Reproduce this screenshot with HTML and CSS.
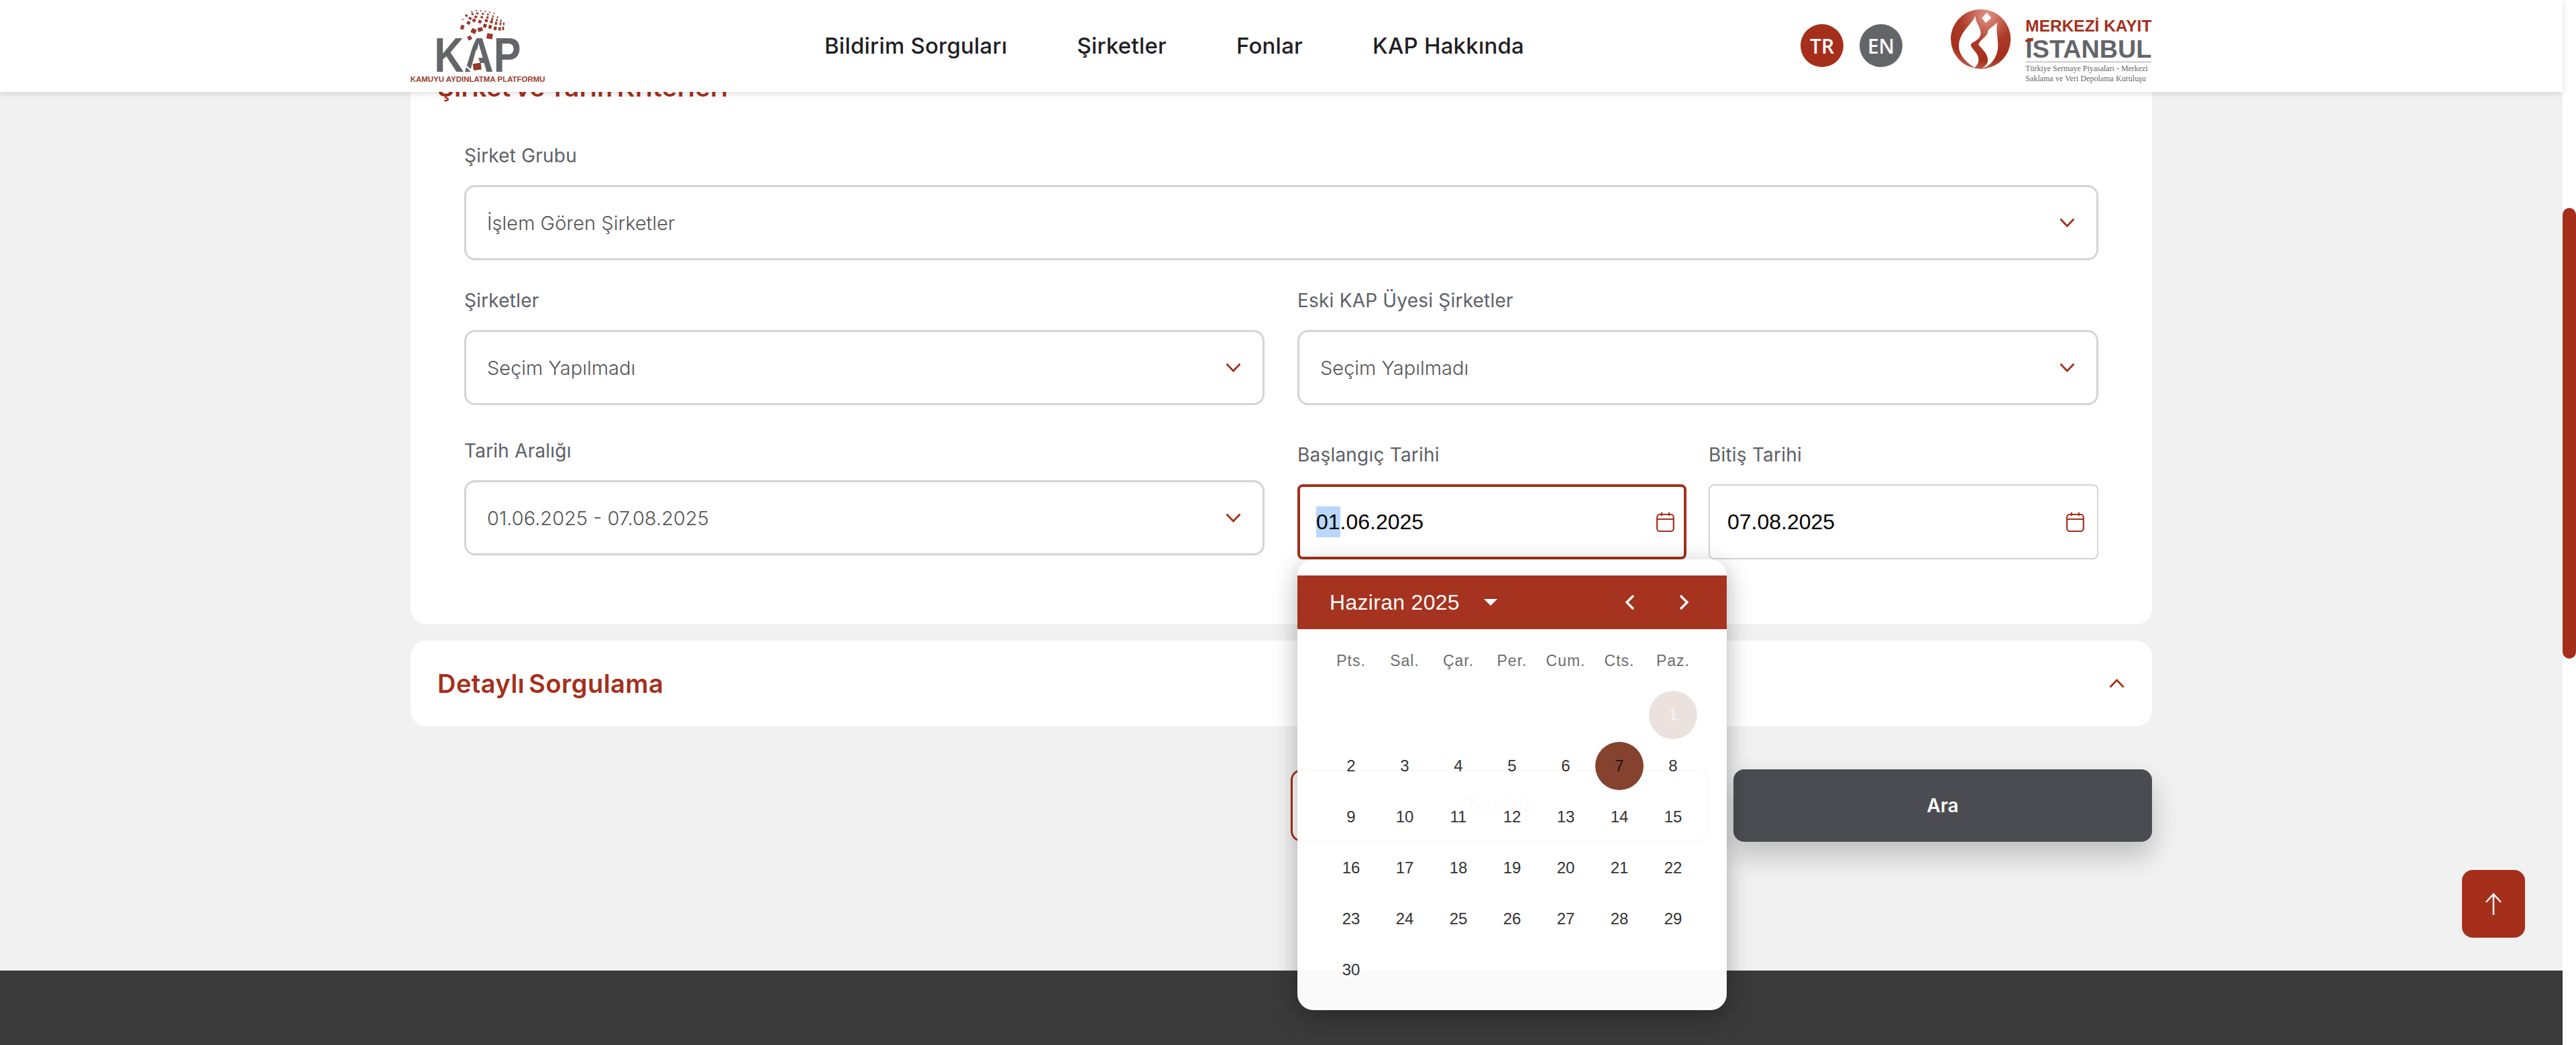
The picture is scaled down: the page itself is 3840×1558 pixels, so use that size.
FILE: index.html
```html
<!DOCTYPE html>
<html lang="tr">
<head>
<meta charset="utf-8">
<title>KAP - Bildirim Sorguları</title>
<link rel="stylesheet" href="styles.css">
</head>
<body>
<div class="page">
  <header class="topbar">
    <div class="topbar-inner">
      <svg class="kap-logo" viewBox="0 0 630 375" aria-label="KAP">
        <text class="kap-word" x="112" y="305" textLength="388" lengthAdjust="spacingAndGlyphs">KAP</text>
        <polygon class="logo-white" points="300,205 272,305 332,305 308,240"/>
        <polygon class="logo-white" points="262,215 296,150 304,150 268,226"/>
        <polygon class="logo-white" points="238,262 288,305 276,305 236,268"/>
        <g class="kap-dots">
          <rect x="286" y="268" width="36" height="30" transform="rotate(-8 304 283)"/>
          <rect x="347" y="135" width="26" height="24" transform="rotate(12 360 147)"/>
          <rect x="262" y="146" width="17" height="18" transform="rotate(-25 270 155)"/>
          <rect x="277" y="114" width="22" height="20" transform="rotate(25 288 124)"/>
          <rect x="307" y="108" width="21" height="18" transform="rotate(-15 318 117)"/>
          <rect x="230" y="97" width="15" height="20" transform="rotate(18 238 107)"/>
          <rect x="331" y="92" width="15" height="16" transform="rotate(18 338 100)"/>
          <rect x="355" y="97" width="14" height="16" transform="rotate(15 362 105)"/>
          <rect x="378" y="104" width="13" height="16" transform="rotate(10 385 112)"/>
          <rect x="399" y="106" width="11" height="16" transform="rotate(5 405 114)"/>
          <rect x="416" y="104" width="8" height="16"/>
          <rect x="258" y="80" width="15" height="14" transform="rotate(28 265 87)"/>
          <rect x="283" y="69" width="14" height="14" transform="rotate(25 290 76)"/>
          <rect x="309" y="75" width="14" height="14" transform="rotate(20 316 82)"/>
          <rect x="338" y="71" width="13" height="13" transform="rotate(15 345 78)"/>
          <rect x="362" y="76" width="12" height="13" transform="rotate(12 368 83)"/>
          <rect x="383" y="83" width="10" height="13" transform="rotate(10 388 90)"/>
          <rect x="404" y="85" width="8" height="13" transform="rotate(5 408 92)"/>
          <rect x="420" y="85" width="6" height="13"/>
          <rect x="233" y="71" width="14" height="3" transform="rotate(-25 240 72)"/>
          <rect x="266" y="61" width="13" height="11" transform="rotate(28 272 67)"/>
          <rect x="292" y="55" width="12" height="11" transform="rotate(24 298 60)"/>
          <rect x="319" y="57" width="11" height="10" transform="rotate(20 325 62)"/>
          <rect x="345" y="58" width="10" height="10" transform="rotate(16 350 63)"/>
          <rect x="367" y="65" width="9" height="10" transform="rotate(14 372 70)"/>
          <rect x="388" y="70" width="8" height="10" transform="rotate(10 392 75)"/>
          <rect x="407" y="73" width="6" height="10" transform="rotate(6 410 78)"/>
          <rect x="250" y="50" width="11" height="9" transform="rotate(30 255 55)"/>
          <rect x="278" y="44" width="10" height="8" transform="rotate(28 283 48)"/>
          <rect x="300" y="41" width="10" height="8" transform="rotate(24 305 45)"/>
          <rect x="325" y="43" width="9" height="8" transform="rotate(20 330 47)"/>
          <rect x="348" y="46" width="8" height="8" transform="rotate(18 352 50)"/>
          <rect x="371" y="54" width="7" height="8" transform="rotate(16 375 58)"/>
          <rect x="392" y="58" width="6" height="8" transform="rotate(14 395 62)"/>
          <rect x="276" y="35" width="8" height="5" transform="rotate(28 280 38)"/>
          <rect x="296" y="31" width="8" height="4" transform="rotate(24 300 33)"/>
          <rect x="316" y="31" width="8" height="4" transform="rotate(18 320 33)"/>
          <rect x="336" y="34" width="8" height="4" transform="rotate(16 340 36)"/>
          <rect x="356" y="38" width="8" height="4" transform="rotate(18 360 40)"/>
          <rect x="376" y="43" width="8" height="4" transform="rotate(24 380 45)"/>
        </g>
        <text class="kap-tag" x="5" y="352" textLength="603" lengthAdjust="spacingAndGlyphs">KAMUYU AYDINLATMA PLATFORMU</text>
      </svg>
      <nav class="main-nav">
        <a>Bildirim Sorguları</a>
        <a>Şirketler</a>
        <a>Fonlar</a>
        <a>KAP Hakkında</a>
      </nav>
      <div class="lang-switch">
        <span class="lang lang-active">TR</span>
        <span class="lang lang-idle">EN</span>
      </div>
      <div class="mkk-logo">
        <svg class="mkk-mark" viewBox="0 0 330 315" aria-hidden="true">
          <defs>
            <radialGradient id="mkkGrad" gradientUnits="userSpaceOnUse" cx="185" cy="55" r="270">
              <stop offset="0" stop-color="#e39488"/>
              <stop offset=".45" stop-color="#ab3a26"/>
              <stop offset=".75" stop-color="#a52f1b"/>
              <stop offset="1" stop-color="#d27a6b"/>
            </radialGradient>
          </defs>
          <ellipse cx="158" cy="160" rx="134" ry="133" fill="url(#mkkGrad)"/>
          <path class="logo-white" d="M133,55 C125,90 62,125 60,190 C60,225 80,255 130,288 C150,270 155,250 140,225 C130,210 115,200 113,183 C125,170 155,165 158,135 C158,105 135,90 133,55Z"/>
          <path class="logo-white" d="M232,85 C215,105 195,110 190,125 C192,145 150,165 148,185 C165,205 190,225 190,255 C188,270 178,282 165,290 C200,285 235,240 235,190 C235,150 225,125 232,85Z"/>
          <polygon class="logo-white" points="185,42 205,65 180,88 163,65"/>
        </svg>
        <svg class="mkk-word" viewBox="0 0 594 330" aria-label="Merkezi Kayıt İstanbul">
          <text class="mkk-red" x="28" y="80" textLength="564" lengthAdjust="spacingAndGlyphs">MERKEZİ KAYIT</text>
          <text class="mkk-gray" x="28" y="198" textLength="564" lengthAdjust="spacingAndGlyphs">İSTANBUL</text>
          <rect class="logo-white" x="20" y="84" width="60" height="26"/>
          <polygon class="mkk-slash" points="28,118 62,108 62,124 28,128"/>
          <rect class="mkk-rule" x="28" y="214" width="564" height="6"/>
          <text class="mkk-small" x="28" y="258" textLength="547" lengthAdjust="spacingAndGlyphs">Türkiye Sermaye Piyasaları - Merkezi</text>
          <text class="mkk-small" x="28" y="302" textLength="539" lengthAdjust="spacingAndGlyphs">Saklama ve Veri Depolama Kuruluşu</text>
        </svg>
      </div>
    </div>
  </header>

  <main class="content">
    <section class="card">
      <div class="card-head">
        <h2 class="card-title">Şirket ve Tarih Kriterleri</h2>
        <svg class="chev chev-flip" viewBox="0 0 23 14"><polyline points="1.5,1.5 11.5,12 21.5,1.5"/></svg>
      </div>
      <div class="card-body">
        <div class="field">
          <label class="field-label">Şirket Grubu</label>
          <div class="select"><span>İşlem Gören Şirketler</span><svg class="chev" viewBox="0 0 23 14"><polyline points="1.5,1.5 11.5,12 21.5,1.5"/></svg></div>
        </div>
        <div class="two-col">
          <div class="field">
            <label class="field-label">Şirketler</label>
            <div class="select"><span>Seçim Yapılmadı</span><svg class="chev" viewBox="0 0 23 14"><polyline points="1.5,1.5 11.5,12 21.5,1.5"/></svg></div>
          </div>
          <div class="field">
            <label class="field-label">Eski KAP Üyesi Şirketler</label>
            <div class="select"><span>Seçim Yapılmadı</span><svg class="chev" viewBox="0 0 23 14"><polyline points="1.5,1.5 11.5,12 21.5,1.5"/></svg></div>
          </div>
        </div>
        <div class="two-col two-col-dates">
          <div class="field">
            <label class="field-label">Tarih Aralığı</label>
            <div class="select"><span>01.06.2025 - 07.08.2025</span><svg class="chev" viewBox="0 0 23 14"><polyline points="1.5,1.5 11.5,12 21.5,1.5"/></svg></div>
          </div>
          <div class="date-pair">
            <div class="field date-field">
              <label class="field-label">Başlangıç Tarihi</label>
              <div class="date-input date-focus">
                <span class="date-text"><span class="date-sel">01</span>.06.2025</span>
                <svg class="cal-icon" viewBox="0 0 27 30"><rect x="1.2" y="4" width="24.6" height="25" rx="4"/><path d="M1.2 11H25.8M8 1V6M19 1V6"/></svg>
              </div>
              <div class="calendar">
                <div class="cal-head">
                  <span class="cal-month">Haziran 2025</span>
                  <svg class="cal-caret" viewBox="0 0 20 10"><polygon points="0,0 20,0 10,10"/></svg>
                  <svg class="cal-nav cal-prev" viewBox="0 0 16 24"><polyline points="13,2 3,12 13,22"/></svg>
                  <svg class="cal-nav cal-next" viewBox="0 0 16 24"><polyline points="3,2 13,12 3,22"/></svg>
                </div>
                <div class="cal-weekdays">
                  <span>Pts.</span><span>Sal.</span><span>Çar.</span><span>Per.</span><span>Cum.</span><span>Cts.</span><span>Paz.</span>
                </div>
                <div class="cal-days">
                  <span class="day day-first day-start">1</span>
                  <span class="day">2</span><span class="day">3</span><span class="day">4</span><span class="day">5</span><span class="day">6</span><span class="day day-today">7</span><span class="day">8</span>
                  <span class="day">9</span><span class="day">10</span><span class="day">11</span><span class="day">12</span><span class="day">13</span><span class="day">14</span><span class="day">15</span>
                  <span class="day">16</span><span class="day">17</span><span class="day">18</span><span class="day">19</span><span class="day">20</span><span class="day">21</span><span class="day">22</span>
                  <span class="day">23</span><span class="day">24</span><span class="day">25</span><span class="day">26</span><span class="day">27</span><span class="day">28</span><span class="day">29</span>
                  <span class="day">30</span>
                </div>
              </div>
            </div>
            <div class="field date-field">
              <label class="field-label">Bitiş Tarihi</label>
              <div class="date-input">
                <span class="date-text">07.08.2025</span>
                <svg class="cal-icon" viewBox="0 0 27 30"><rect x="1.2" y="4" width="24.6" height="25" rx="4"/><path d="M1.2 11H25.8M8 1V6M19 1V6"/></svg>
              </div>
            </div>
          </div>
        </div>
      </div>
    </section>

    <section class="card card-collapsed">
      <div class="card-head">
        <h2 class="card-title">Detaylı Sorgulama</h2>
        <svg class="chev chev-flip" viewBox="0 0 23 14"><polyline points="1.5,1.5 11.5,12 21.5,1.5"/></svg>
      </div>
    </section>

    <div class="actions">
      <button class="btn btn-clear">Temizle</button>
      <button class="btn btn-search">Ara</button>
    </div>
  </main>

  <footer class="footer"></footer>

  <button class="to-top" aria-label="Yukarı">
    <svg viewBox="0 0 26 34"><path d="M13 33V2M2 14L13 2L24 14"/></svg>
  </button>
</div>
<aside class="scrollbar"><div class="scroll-thumb"></div></aside>
</body>
</html>
```

FILE: styles.css
```css
* { box-sizing: border-box; }
html, body { margin: 0; height: 100%; }
body {
  display: flex;
  height: 1558px;
  overflow: hidden;
  background: #f1f1f1;
  font-family: "Inter", "Noto Sans", sans-serif;
}
.page {
  position: relative;
  flex: 1;
  min-width: 0;
  display: flex;
  flex-direction: column;
}
.scrollbar { width: 20px; background: #fff; padding-top: 310px; }
.scroll-thumb { height: 672px; background: #a52f1b; border-radius: 10px; }

/* header */
.topbar {
  position: absolute;
  z-index: 5;
  top: 0; left: 0; right: 0;
  height: 137px;
  background: #fff;
  box-shadow: 0 2px 10px rgba(0,0,0,.14);
}
.topbar-inner {
  width: 2596px;
  height: 100%;
  margin: 0 auto;
  display: flex;
  align-items: flex-start;
}
.kap-logo { width: 210px; height: 125px; margin: 5px 0 0 -2px; flex: none; }
.kap-word { font: 700 219px "Liberation Sans", sans-serif; fill: #636569; }
.kap-tag { font: 700 31px "Liberation Sans", sans-serif; fill: #96402c; }
.kap-dots rect { fill: #96392a; }
.logo-white { fill: #fff; }
.main-nav {
  display: flex;
  gap: 104px;
  margin: 48px 0 0 409px;
  font-size: 33px;
  line-height: 40px;
  font-weight: 500;
  color: #1f2024;
  letter-spacing: .2px;
  white-space: nowrap;
}
.lang-switch { display: flex; gap: 24px; margin: 36px 0 0 auto; }
.lang {
  width: 64px; height: 64px;
  border-radius: 50%;
  display: flex; align-items: center; justify-content: center;
  color: #fff;
  font: 600 30px "Open Sans", sans-serif;
}
.lang-active { background: #a52f1b; }
.lang-idle { background: #636569; }
.mkk-logo { display: flex; margin: 5px 0 0 64px; }
.mkk-mark { width: 110px; height: 105px; flex: none; }
.mkk-word { width: 198px; height: 110px; margin-top: 15px; flex: none; }
.mkk-red { font: 700 70px "Liberation Sans", sans-serif; fill: #a52f1b; }
.mkk-gray { font: 700 112px "Liberation Sans", sans-serif; fill: #636569; }
.mkk-slash { fill: #a52f1b; }
.mkk-rule { fill: #c9c9c9; }
.mkk-small { font: 400 36px "Liberation Serif", serif; fill: #666; }

/* content */
.content {
  width: 2596px;
  margin: 0 auto;
  padding-top: 66px;
  display: flex;
  flex-direction: column;
}
.card {
  background: #fff;
  border-radius: 24px;
  height: 865px;
}
.card-collapsed { height: 128px; margin-top: 24px; }
.card-head {
  height: 128px;
  padding: 0 41px 0 40px;
  display: flex;
  align-items: center;
  justify-content: space-between;
}
.card-title {
  margin: 0;
  font-size: 38px;
  line-height: 44px;
  font-weight: 600;
  letter-spacing: .45px;
  word-spacing: -4px;
  color: #a52f1b;
}
.chev { width: 23px; height: 14px; flex: none; }
.chev polyline { fill: none; stroke: #a52f1b; stroke-width: 2.8; }
.chev-flip { transform: scaleY(-1); margin-right: 0; }
.card-body {
  padding: 16px 80px 0;
  display: flex;
  flex-direction: column;
  gap: 38px;
}
.two-col { display: grid; grid-template-columns: 1193px 1194px; column-gap: 49px; }
.two-col-dates { margin-top: 8px; }
.field { display: flex; flex-direction: column; gap: 22px; min-width: 0; }
.field-label {
  font-size: 28px;
  line-height: 44px;
  font-weight: 400;
  letter-spacing: .2px;
  color: #5e6067;
}
.select {
  height: 112px;
  padding: 0 32px 0 31px;
  border: 3px solid #d4d4d4;
  border-radius: 16px;
  background: #fff;
  display: flex;
  align-items: center;
  justify-content: space-between;
  font-size: 29px;
  font-weight: 300;
  color: #555;
}
.date-pair { display: grid; grid-template-columns: 580px 581px; column-gap: 33px; padding-top: 6px; }
.date-field { position: relative; }
.date-input {
  height: 112px;
  padding: 0 19px 0 26px;
  border: 2px solid #d4d4d4;
  border-radius: 8px;
  background: #fff;
  display: flex;
  align-items: center;
  justify-content: space-between;
}
.date-focus { border: 4px solid #a52f1b; padding: 0 14px 0 24px; }
.date-text { font: 400 32px/46px "Liberation Sans", sans-serif; color: #000; }
.date-sel { display: inline-block; background: #b9d7fb; }
.cal-icon { width: 27px; height: 30px; flex: none; }
.cal-icon rect, .cal-icon path { fill: none; stroke: #a52f1b; stroke-width: 2.2; }

/* calendar popup */
.calendar {
  position: absolute;
  z-index: 3;
  top: 100%;
  left: 0;
  width: 640px;
  height: 672px;
  padding-top: 24px;
  border-radius: 24px;
  background: rgba(255,255,255,.975);
  box-shadow: 0 10px 36px rgba(0,0,0,.3);
  font-family: "Liberation Sans", sans-serif;
}
.cal-head {
  height: 80px;
  padding: 0 48px;
  background: #a5331f;
  display: flex;
  align-items: center;
  color: #fff;
}
.cal-month { font-size: 32px; letter-spacing: .3px; }
.cal-caret { width: 20px; height: 10px; margin-left: 36px; fill: #fff; }
.cal-nav { width: 16px; height: 24px; fill: none; stroke: #fff; stroke-width: 3.4; }
.cal-prev { margin-left: auto; margin-right: 64px; }
.cal-next { margin-right: 8px; }
.cal-weekdays, .cal-days {
  display: grid;
  grid-template-columns: repeat(7, 80px);
  padding-left: 40px;
}
.cal-weekdays {
  height: 76px;
  margin-top: 9px;
  align-items: center;
  justify-items: center;
  font-size: 23px;
  letter-spacing: 1px;
  color: #6e6e6e;
}
.cal-days { margin-top: 5px; grid-auto-rows: 76px; }
.day {
  width: 72px; height: 72px;
  margin: 2px 4px;
  border-radius: 50%;
  display: flex;
  align-items: center;
  justify-content: center;
  font-size: 24px;
  color: #333;
}
.day-first { grid-column-start: 7; }
.day-start { background: #ebe2df; color: #f8f4f3; }
.day-today { background: #85432f; color: #1c1210; }

/* actions */
.actions { display: flex; justify-content: flex-end; gap: 36px; margin-top: 64px; }
.btn {
  width: 624px;
  height: 108px;
  border-radius: 16px;
  font-family: "Inter", sans-serif;
  font-size: 28px;
  font-weight: 600;
}
.btn-clear { background: #fff; border: 3px solid #a52f1b; color: #a52f1b; font-weight: 500; }
.btn-search { background: #4b4c51; border: 0; color: #fff; box-shadow: 0 20px 40px rgba(0,0,0,.22); }

.footer { margin-top: auto; height: 111px; background: #3a3a3a; }

.to-top {
  position: absolute;
  z-index: 4;
  left: 3670px;
  top: 1297px;
  width: 94px;
  height: 101px;
  padding: 0;
  border: 0;
  border-radius: 16px;
  background: #a52f1b;
  display: flex;
  align-items: center;
  justify-content: center;
}
.to-top svg { width: 26px; height: 34px; fill: none; stroke: #fff; stroke-width: 2.5; }
```
